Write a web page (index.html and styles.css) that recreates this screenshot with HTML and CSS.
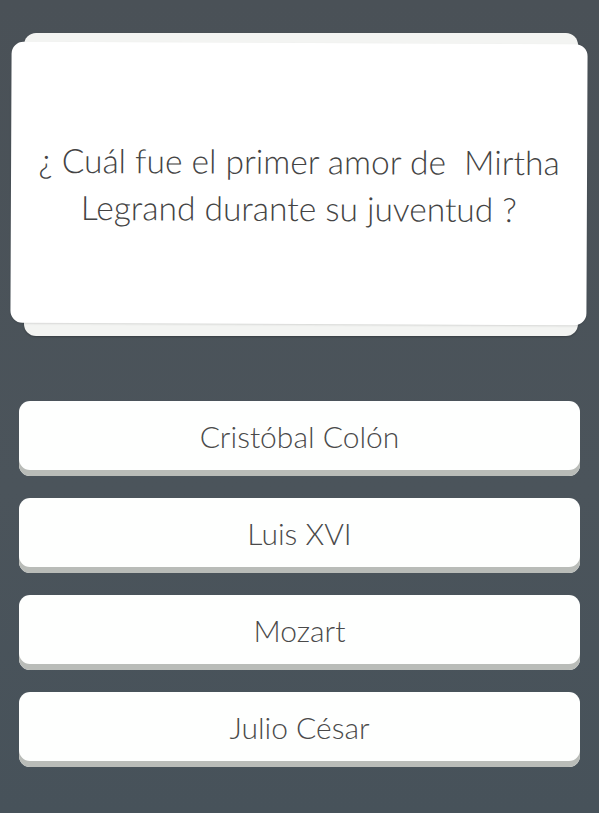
FILE: index.html
```html
<!DOCTYPE html>
<html lang="es">
<head>
<meta charset="utf-8">
<link rel="stylesheet" href="styles.css">
</head>
<body>
<div class="screen">
  <div class="stack">
    <div class="card-back"></div>
    <div class="card-front">
      <p class="question">¿ Cuál fue el primer amor de&nbsp; Mirtha Legrand durante su juventud ?</p>
    </div>
  </div>
  <div class="answers">
    <div class="answer">Cristóbal Colón</div>
    <div class="answer">Luis XVI</div>
    <div class="answer">Mozart</div>
    <div class="answer">Julio César</div>
  </div>
</div>
</body>
</html>
```
FILE: styles.css
```css
* { box-sizing: border-box; }
html, body { margin: 0; padding: 0; }
body {
  width: 599px;
  height: 813px;
  overflow: hidden;
  background: linear-gradient(#4a5157, #4b545b 60%, #47525a);
  font-family: Lato, "Open Sans", sans-serif;
}
.screen {
  display: flex;
  flex-direction: column;
  padding-top: 33px;
}
.stack {
  position: relative;
  height: 303px;
  margin: 0 12px 0 10px;
}
.card-back {
  position: absolute;
  left: 14px;
  right: 9px;
  top: 0;
  bottom: 0;
  background: #f3f4f2;
  border-radius: 12px;
  box-shadow: 0 1px 2px rgba(0,0,0,0.25);
}
.card-front {
  position: absolute;
  left: 1px;
  right: 0;
  top: 10px;
  bottom: 12px;
  background: #ffffff;
  border-radius: 12px;
  box-shadow: 0 1px 2px rgba(0,0,0,0.12);
  display: flex;
  align-items: center;
  justify-content: center;
  transform: rotate(0.25deg);
}
.question {
  margin: 0;
  padding: 3px 8px 0;
  text-align: center;
  font-size: 33.5px;
  font-weight: 300;
  line-height: 47px;
  color: #444444;
}
.answers {
  display: flex;
  flex-direction: column;
  gap: 22px;
  margin: 65px 19px 0 19px;
}
.answer {
  height: 75px;
  padding-bottom: 6px;
  background: #fefffe;
  border-radius: 11px;
  box-shadow: inset 0 -6px 0 #b9bcb8;
  display: flex;
  align-items: center;
  justify-content: center;
  font-size: 30px;
  font-weight: 300;
  color: #4a4a4a;
}
```
